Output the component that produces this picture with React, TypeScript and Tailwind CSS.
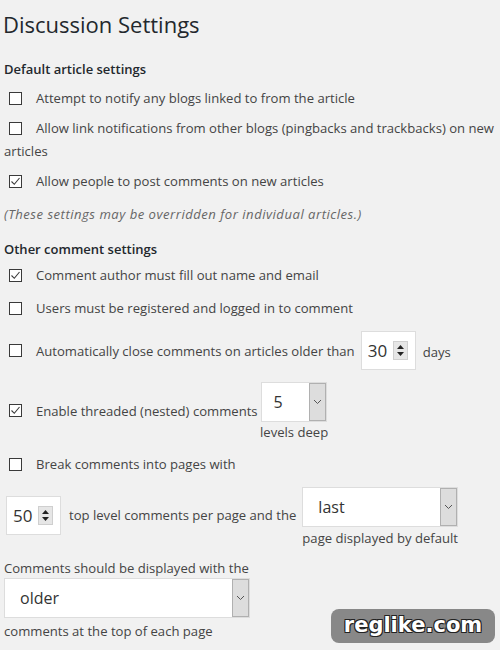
import React from "react";

const Check = ({ checked }: { checked?: boolean }) => (
  <span className="inline-flex h-[13px] w-[13px] shrink-0 items-center justify-center border border-[#3a3a3a] bg-white align-middle">
    {checked && (
      <svg width="11" height="11" viewBox="0 0 11 11">
        <path d="M1.5 5.5 L4.3 8.3 L9.5 2" fill="none" stroke="#3a3a3a" strokeWidth="1.1" />
      </svg>
    )}
  </span>
);

const Spinner = ({ value }: { value: string }) => (
  <div className="flex h-[39px] w-[55px] shrink-0 items-center border border-[#dddddd] bg-white pl-[6px]">
    <span className="text-[17px] text-[#333]">{value}</span>
    <span className="ml-[6px] flex h-[19px] w-[15px] flex-col items-center justify-center gap-[3px] border border-[#cfcfcf] bg-[#e6e6e6]">
      <svg width="7" height="4" viewBox="0 0 7 4"><path d="M0 4 L3.5 0 L7 4 Z" fill="#222" /></svg>
      <svg width="7" height="4" viewBox="0 0 7 4"><path d="M0 0 L3.5 4 L7 0 Z" fill="#222" /></svg>
    </span>
  </div>
);

const Select = ({ value, w, padL }: { value: string; w: string; padL: string }) => (
  <div className={`flex h-[40px] shrink-0 border border-[#dddddd] bg-white ${w}`}>
    <div className={`flex flex-1 items-center text-[16px] text-[#333] ${padL}`}>{value}</div>
    <div className="flex w-[17px] items-center justify-center border-[1.5px] border-[#b0b0b0] bg-[#dddddd]">
      <svg width="9" height="6" viewBox="0 0 9 6"><path d="M1 1 L4.5 4.5 L8 1" fill="none" stroke="#555" strokeWidth="1" /></svg>
    </div>
  </div>
);

export default function App() {
  return (
    <div
      className="relative h-[650px] w-[500px] overflow-hidden bg-[#f1f1f1] text-[13.1px] text-[#444]"
      style={{ fontFamily: '"Open Sans", "Noto Sans", sans-serif' }}
    >
      <div className="flex h-[36px] items-center pl-[3px] pt-[12px] text-[22px] leading-none text-[#23282d]">Discussion Settings</div>

      <div className="mt-[23px] pl-[4px] text-[13px] font-semibold leading-[20px] text-[#23282d]">Default article settings</div>

      <div className="mt-[9px] flex items-center pl-[9px] leading-[20px]">
        <Check />
        <span className="ml-[14px]">Attempt to notify any blogs linked to from the article</span>
      </div>

      <div className="mt-[9px] pl-[4px] leading-[23px]">
        <span className="ml-[5px] mr-[14px] inline-flex align-[-2px]"><Check /></span>
        Allow link notifications from other blogs (pingbacks and trackbacks) on new articles
      </div>

      <div className="mt-[8px] flex items-center pl-[9px] leading-[20px]">
        <Check checked />
        <span className="ml-[14px]">Allow people to post comments on new articles</span>
      </div>

      <div className="mt-[13px] pl-[4px] italic leading-[20px] tracking-[0.5px] text-[#666]">(These settings may be overridden for individual articles.)</div>

      <div className="mt-[15px] pl-[4px] text-[13px] font-semibold leading-[20px] text-[#23282d]">Other comment settings</div>

      <div className="mt-[6px] flex items-center pl-[9px] leading-[20px]">
        <Check checked />
        <span className="ml-[14px]">Comment author must fill out name and email</span>
      </div>

      <div className="mt-[13px] flex items-center pl-[9px] leading-[20px]">
        <Check />
        <span className="ml-[14px]">Users must be registered and logged in to comment</span>
      </div>

      <div className="mt-[13px] flex items-center pl-[9px] leading-[20px]">
        <Check />
        <span className="ml-[14px]">Automatically close comments on articles older than</span>
        <span className="ml-[6px]"><Spinner value="30" /></span>
        <span className="ml-[7px] mt-[2px]">days</span>
      </div>

      <div className="mt-[12px] flex items-start pl-[9px] leading-[20px]">
        <span className="mt-[17px]"><Check checked /></span>
        <span className="ml-[14px] pt-[19px]">Enable threaded (nested) comments</span>
        <span className="ml-[3px]">
          <Select value="5" w="w-[66px]" padL="pl-[12px]" />
        </span>
      </div>
      <div className="mt-[-1px] pl-[260px] leading-[22px]">levels deep</div>

      <div className="mt-[11px] flex items-center pl-[9px] leading-[20px]">
        <Check />
        <span className="ml-[14px]">Break comments into pages with</span>
      </div>

      <div className="mt-[11px] flex items-start pl-[6px] leading-[20px]">
        <span className="mt-[11px]"><Spinner value="50" /></span>
        <span className="ml-[8px] pt-[20px]">top level comments per page and the</span>
        <span className="ml-[6px] mt-[2px] flex flex-col">
          <Select value="last" w="w-[156px]" padL="pl-[15px]" />
          <span className="leading-[22px]">page displayed by default</span>
        </span>
      </div>

      <div className="mt-[9px] pl-[4px] leading-[20px]">Comments should be displayed with the</div>
      <div className="pl-[4px]">
        <Select value="older" w="w-[246px]" padL="pl-[15px]" />
      </div>
      <div className="mt-[1px] pl-[4px] leading-[24px]">comments at the top of each page</div>

      <div className="absolute left-[331px] top-[609px] flex h-[34px] w-[164px] items-center justify-center rounded-[8px] bg-[#888888]">
        <span
          className="text-[21px] font-bold text-white"
          style={{ fontFamily: '"DejaVu Sans", sans-serif', textShadow: "1px 1px 0 #222, -1px -1px 0 #222, 1px -1px 0 #222, -1px 1px 0 #222" }}
        >
          reglike.com
        </span>
      </div>
    </div>
  );
}
